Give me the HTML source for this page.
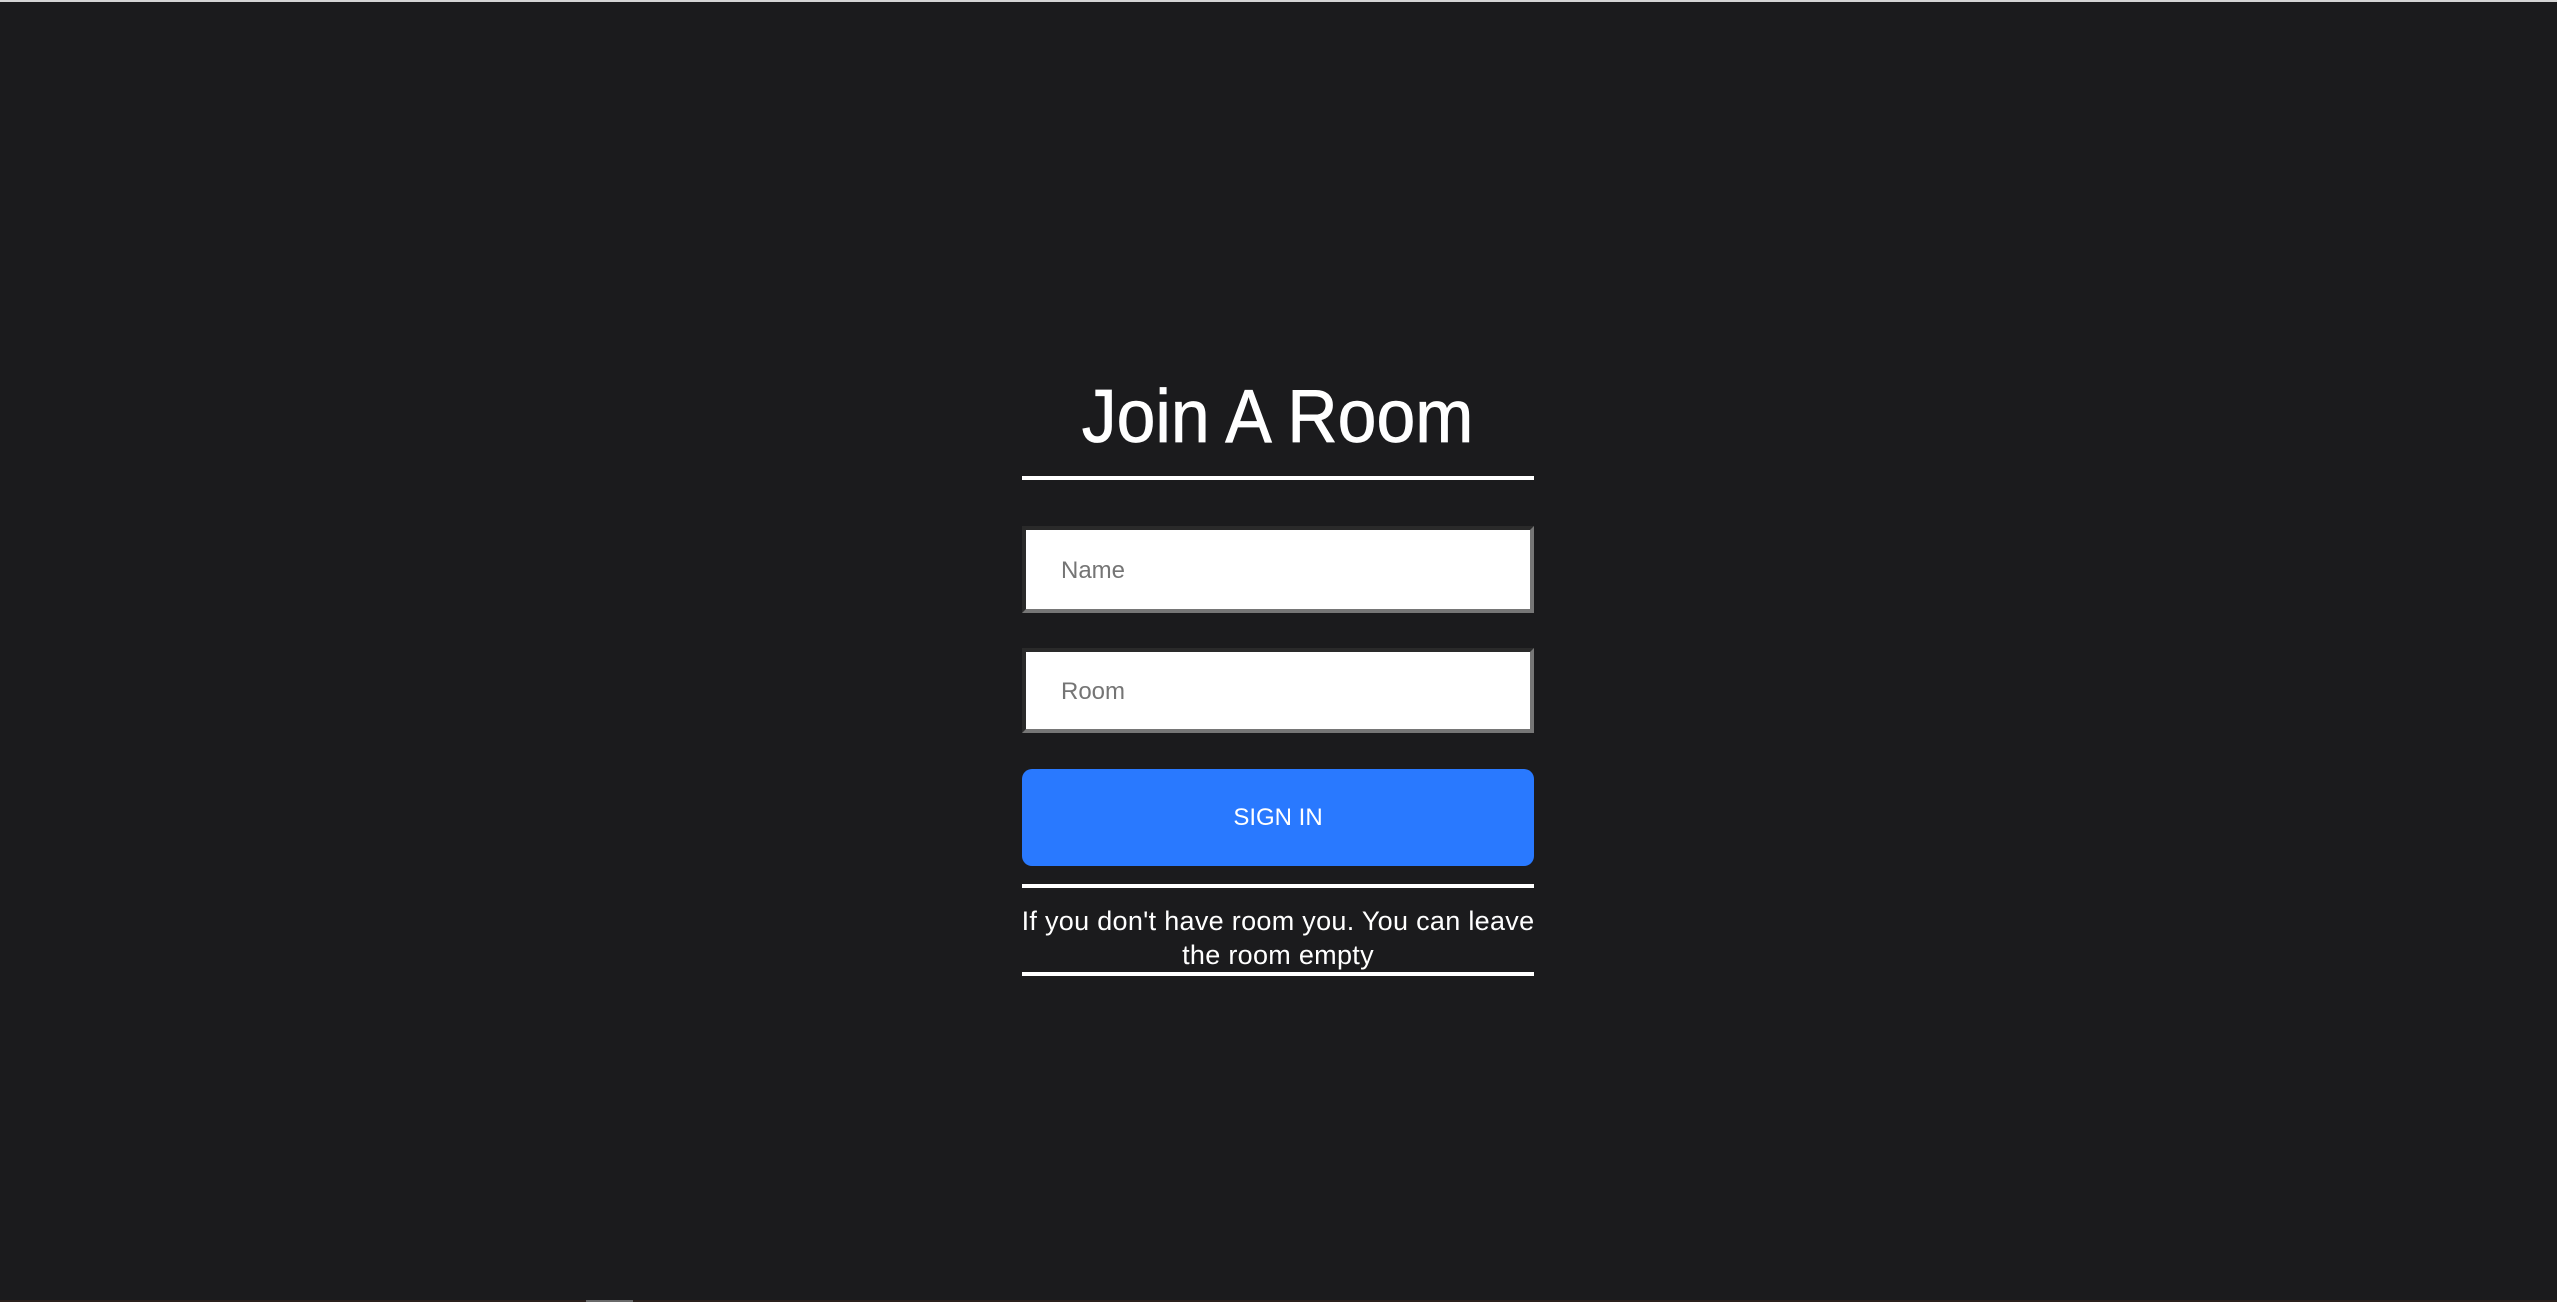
<!DOCTYPE html>
<html><head><meta charset="utf-8"><style>
html,body{margin:0;padding:0;width:2557px;height:1302px;overflow:hidden;background:#1b1b1d;font-family:"Liberation Sans",Arial,sans-serif}
.abs{position:absolute}
.line{position:absolute;left:1022px;width:512px;height:4px;background:#fff}
.inp{position:absolute;left:1022px;width:512px;box-sizing:border-box;background:#fff;border-style:solid;border-width:4px;border-color:#2a2a2a #767676 #767676 #2a2a2a}
.ph{position:absolute;left:35px;color:#757575;font-size:24px;line-height:28px}
</style></head><body>
<div class="abs" style="left:0;top:0;width:2557px;height:2px;background:#d4d4d4"></div>
<div class="abs" style="left:0;top:1300px;width:2557px;height:2px;background:#2a201c"></div>
<div class="abs" style="left:586px;top:1300px;width:47px;height:2px;background:#6a6a6a"></div>
<div class="abs" style="left:1022px;top:373px;width:512px;text-align:center;color:#fff;font-size:75px;line-height:86px;-webkit-text-stroke:0.8px #fff"><span style="display:inline-block;transform:scaleX(0.93)">Join A Room</span></div>
<div class="line" style="top:476px"></div>
<div class="inp" style="top:526px;height:87px"><span class="ph" style="top:27px">Name</span></div>
<div class="inp" style="top:648px;height:85px"><span class="ph" style="top:26px">Room</span></div>
<div class="abs" style="left:1022px;top:769px;width:512px;height:97px;background:#2979ff;border-radius:10px;color:#fff;font-size:24px;line-height:97px;text-align:center">SIGN IN</div>
<div class="line" style="top:884px"></div>
<div class="abs" style="left:1012px;top:904px;width:532px;text-align:center;color:#fff;font-size:27px;line-height:34px;letter-spacing:0.3px">If you don't have room you. You can leave<br>the room empty</div>
<div class="line" style="top:972px"></div>
</body></html>
